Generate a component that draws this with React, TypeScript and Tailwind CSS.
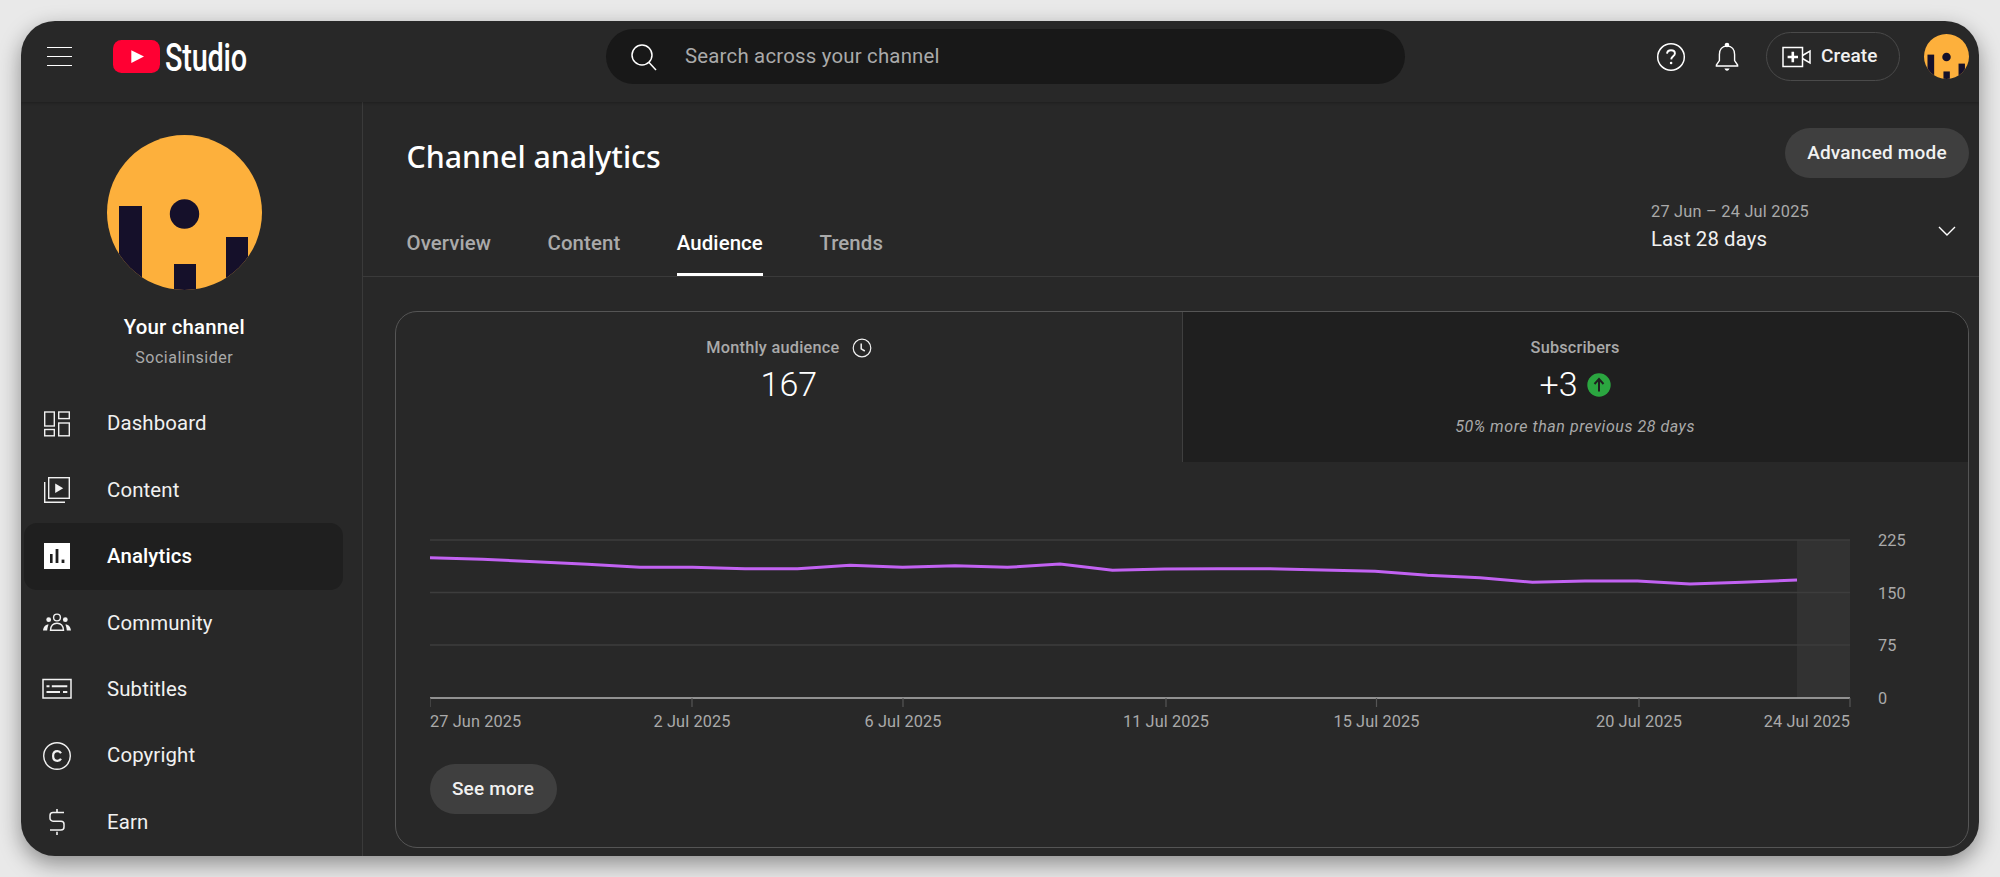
import React from "react";

const s = "#f1f1f1";

function Avatar({ size }: { size: number }) {
  return (
    <svg width={size} height={size} viewBox="0 0 155 155" className="rounded-full block shrink-0">
      <rect width="155" height="155" fill="#fdb03c" />
      <rect x="12" y="71" width="23" height="84" fill="#15102a" />
      <circle cx="77.5" cy="79" r="14.7" fill="#15102a" />
      <rect x="67" y="129" width="22" height="26" fill="#15102a" />
      <rect x="119" y="102" width="22" height="53" fill="#15102a" />
    </svg>
  );
}

function NavIcon({ name }: { name: string }) {
  const common = { width: 30, height: 30, viewBox: "0 0 30 30", fill: "none", stroke: s, strokeWidth: 1.4, className: "shrink-0" };
  switch (name) {
    case "Dashboard":
      return (
        <svg {...common}>
          <rect x="2.7" y="3" width="9.6" height="14" />
          <rect x="16.7" y="3" width="10.6" height="6.6" />
          <rect x="2.7" y="20.5" width="9.6" height="6.3" />
          <rect x="16.7" y="14" width="10.6" height="12.8" />
        </svg>
      );
    case "Content":
      return (
        <svg {...common}>
          <rect x="6.7" y="2.7" width="20.6" height="20.6" />
          <path d="M2.7 7v20.3H23" />
          <path d="M13.2 8.5v9.5l8-4.75z" fill={s} stroke="none" />
        </svg>
      );
    case "Analytics":
      return (
        <svg width="30" height="30" viewBox="0 0 30 30" className="shrink-0">
          <rect x="2" y="2" width="26" height="26" fill="#fff" />
          <rect x="8" y="13" width="2.6" height="9" fill="#1f1f1f" />
          <rect x="13.6" y="8" width="2.8" height="14" fill="#1f1f1f" />
          <rect x="19.6" y="18.6" width="2.8" height="3.4" fill="#1f1f1f" />
        </svg>
      );
    case "Community":
      return (
        <svg {...common}>
          <circle cx="15" cy="9.5" r="3.4" />
          <path d="M8.5 22.2c.3-4.6 3-7 6.5-7s6.2 2.4 6.5 7z" />
          <circle cx="6.7" cy="11.7" r="2.4" fill={s} stroke="none" />
          <circle cx="23.3" cy="11.7" r="2.4" fill={s} stroke="none" />
          <path d="M1 22.6c.3-3.6 2.2-6.2 5.6-6.2-.8 1.8-1.3 3.8-1.4 6.2zM29 22.6c-.3-3.6-2.2-6.2-5.6-6.2.8 1.8 1.3 3.8 1.4 6.2z" fill={s} stroke="none" />
        </svg>
      );
    case "Subtitles":
      return (
        <svg {...common}>
          <rect x="1" y="5.5" width="28" height="18.5" strokeWidth="1.5" />
          <path d="M4.5 12.2h3M9.8 12.2h15.5M4.5 18h13.5M21 18h4.3" strokeWidth="2" />
        </svg>
      );
    case "Copyright":
      return (
        <svg {...common}>
          <circle cx="15" cy="15" r="13.3" />
          <path d="M19 12.2c-.7-1.3-2-2-3.6-2-2.6 0-4.3 2-4.3 4.8s1.7 4.8 4.3 4.8c1.6 0 2.9-.7 3.6-2" strokeWidth="2.2" />
        </svg>
      );
    default:
      return (
        <svg {...common}>
          <path d="M15 2v3.3M15 24.7V28" strokeWidth="1.6" />
          <path d="M22 5.5H11a3 3 0 0 0-3 3v2.7a3 3 0 0 0 3 3h8a3 3 0 0 1 3 3v2.7a3 3 0 0 1-3 3H8" strokeWidth="1.5" />
        </svg>
      );
  }
}

const nav = ["Dashboard", "Content", "Analytics", "Community", "Subtitles", "Copyright", "Earn"];
const tabs = ["Overview", "Content", "Audience", "Trends"];

const pts: [number, number][] = [
  [430, 557.7], [482.5, 559.3], [535, 561.7], [587.5, 564.3], [640, 567.3], [692.5, 567.3], [745, 568.7],
  [797.5, 568.7], [850, 565.3], [902.5, 567.3], [955, 565.7], [1007.5, 567.3], [1060, 564], [1112.5, 570.3],
  [1165, 569], [1217.5, 568.7], [1270, 568.7], [1322.5, 570], [1375, 571.3], [1427.5, 575.3], [1480, 577.7],
  [1532.5, 582.3], [1585, 581], [1637.5, 581], [1690, 584], [1742.5, 582.3], [1797, 580],
];

const xLabels: [number, string, "start" | "middle" | "end"][] = [
  [430, "27 Jun 2025", "start"],
  [692, "2 Jul 2025", "middle"],
  [903, "6 Jul 2025", "middle"],
  [1166, "11 Jul 2025", "middle"],
  [1376.5, "15 Jul 2025", "middle"],
  [1639, "20 Jul 2025", "middle"],
  [1850, "24 Jul 2025", "end"],
];

function Chart() {
  return (
    <svg width="1490" height="200" viewBox="430 530 1490 200" className="block ml-[33.5px] mt-[68px] font-[Roboto,sans-serif] tracking-[0.12px]">
      <rect x="1797" y="540" width="53" height="158" fill="#323232" />
      {[540, 592.5, 645].map((y) => (
        <line key={y} x1="430" x2="1850" y1={y} y2={y} stroke="#3d3d3d" strokeWidth="1.4" />
      ))}
      <line x1="430" x2="1850" y1="698" y2="698" stroke="#b5b5b5" strokeWidth="1.6" />
      {xLabels.map(([x]) => (
        <line key={x} x1={x} x2={x} y1="698" y2="707" stroke="#555" strokeWidth="1.2" />
      ))}
      <polyline points={pts.map((p) => p.join(",")).join(" ")} fill="none" stroke="#c262f2" strokeWidth="3" />
      {xLabels.map(([x, t, a]) => (
        <text key={t} x={x} y="726.5" textAnchor={a} fontSize="16.3" fill="#aaaaaa">{t}</text>
      ))}
      {[["225", 540], ["150", 592.5], ["75", 645], ["0", 698]].map(([t, y]) => (
        <text key={t} x="1878" y={Number(y) + 6} fontSize="16.3" fill="#aaaaaa">{t}</text>
      ))}
    </svg>
  );
}

export default function App() {
  return (
    <div className="w-[2000px] h-[877px] bg-[#e9e9e9] p-[21px] font-[Roboto,sans-serif] text-[#f1f1f1] overflow-hidden">
      <div className="w-[1958px] h-[835px] bg-[#282828] rounded-[34px] overflow-hidden flex flex-col shadow-[0_8px_22px_rgba(0,0,0,0.4)]">
        <header className="h-[81px] shrink-0 flex items-center pb-[10px] relative shadow-[0_1px_3px_rgba(0,0,0,0.25)]">
          <div className="w-[585px] flex items-center shrink-0 pl-[26px]">
            <div className="w-[25px] flex flex-col gap-[7.5px]">
              <div className="h-[1.6px] bg-white" />
              <div className="h-[1.6px] bg-white" />
              <div className="h-[1.6px] bg-white" />
            </div>
            <svg width="47" height="33" viewBox="0 0 47 33" className="ml-[41px] shrink-0">
              <rect width="47" height="33" rx="8.5" fill="#ff0033" />
              <path d="M18.3 10.3v12.6L31 16.6z" fill="#fff" />
            </svg>
            <span className="ml-[5px] mt-[3px] text-[39px] leading-none font-medium text-white origin-left scale-x-[0.74] tracking-[-0.3px]">Studio</span>
          </div>
          <div className="w-[799px] h-[55px] rounded-full bg-[#181818] flex items-center shrink-0">
            <svg width="28" height="28" viewBox="0 0 28 28" fill="none" stroke="#fff" strokeWidth="1.5" className="ml-[24px] shrink-0">
              <circle cx="12" cy="12" r="10" />
              <path d="M18.8 19.3l7.2 7.7" />
            </svg>
            <span className="ml-[27px] text-[20.4px] text-[#aaaaaa] tracking-[0.2px]">Search across your channel</span>
          </div>
          <div className="flex-1 flex items-center justify-end pr-[10px]">
            <svg width="30" height="30" viewBox="0 0 30 30" fill="none" className="shrink-0">
              <circle cx="15" cy="15" r="13.3" stroke="#fff" strokeWidth="1.5" />
              <path d="M11 11.6c.2-2.2 1.8-3.4 4-3.4 2.3 0 3.9 1.3 3.9 3.2 0 2.8-3.5 2.9-3.7 6" stroke="#fff" strokeWidth="1.9" />
              <circle cx="15.1" cy="21" r="1.3" fill="#fff" />
            </svg>
            <svg width="26" height="30" viewBox="0 0 26 30" fill="none" stroke="#fff" strokeWidth="1.4" className="ml-[28px] shrink-0">
              <path d="M13 4c-5 0-7.6 3.6-7.6 8.4v6.2L2.4 23v1h21.2v-1l-3-4.4v-6.2C20.6 7.6 18 4 13 4z" />
              <circle cx="13" cy="3" r="1.6" fill="#fff" />
              <path d="M10.4 26.4h5.2l-1 1.6a2 2 0 0 1-3.2 0z" fill="#fff" stroke="none" />
            </svg>
            <div className="ml-[26px] h-[49px] w-[134px] rounded-full border-[1.5px] border-[#4a4a4a] flex items-center pl-[15px]">
              <svg width="29" height="22" viewBox="0 0 29 22" fill="none" stroke="#fff" strokeWidth="1.5" className="shrink-0">
                <rect x="1" y="1.5" width="19.5" height="19" />
                <path d="M5.6 11h10.4M10.8 5.8v10.4" strokeWidth="2.6" />
                <path d="M20.5 9.5l7.5-4.5v12l-7.5-4.5" />
              </svg>
              <span className="ml-[10px] text-[19px] font-medium tracking-[0.1px]">Create</span>
            </div>
            <div className="ml-[24px]"><Avatar size={45} /></div>
          </div>
        </header>
        <div className="flex-1 flex min-h-0">
          <aside className="w-[341.5px] shrink-0 border-r-[1.5px] border-[#3a3a3a] flex flex-col">
            <div className="flex flex-col items-center pt-[33px] pr-[14px]">
              <Avatar size={155} />
              <div className="mt-[24px] text-[20.4px] leading-[26px] font-medium text-white tracking-[0.2px]">Your channel</div>
              <div className="mt-[7px] text-[16px] leading-[22px] text-[#aaaaaa] tracking-[0.5px]">Socialinsider</div>
            </div>
            <nav className="mt-[21.5px] flex flex-col">
              {nav.map((n) => {
                const active = n === "Analytics";
                return (
                  <div
                    key={n}
                    className={
                      active
                        ? "h-[66.4px] ml-[3px] w-[319px] rounded-[13px] bg-[#1f1f1f] flex items-center pl-[18px] shrink-0"
                        : "h-[66.4px] ml-[3px] w-[319px] flex items-center pl-[18px] shrink-0"
                    }
                  >
                    <NavIcon name={n} />
                    <span className={active ? "ml-[35px] text-[20.4px] font-medium text-white tracking-[0.12px]" : "ml-[35px] text-[20.4px] text-[#f1f1f1] tracking-[0.12px]"}>{n}</span>
                  </div>
                );
              })}
            </nav>
          </aside>
          <main className="flex-1 min-w-0 flex flex-col">
            <section className="h-[175px] shrink-0 border-b-[1.5px] border-[#3a3a3a] flex flex-col">
              <div className="h-[76px] shrink-0 flex justify-between items-start pl-[44px] pr-[10px] pt-[26px]">
                <h1 className="text-[30.3px] leading-[58px] font-medium font-['Noto_Sans',sans-serif] text-white">Channel analytics</h1>
                <button className="w-[184px] h-[50px] rounded-full bg-[#3f3f3f] text-[19px] font-medium text-[#f1f1f1] tracking-[0.2px] pt-[1px]">Advanced mode</button>
              </div>
              <div className="flex-1 flex justify-between pl-[44px] pr-[23px]">
                <div className="flex gap-[56.5px] items-end">
                  {tabs.map((t) => (
                    <div
                      key={t}
                      className={
                        t === "Audience"
                          ? "h-[50px] pt-[3.5px] text-[20.4px] leading-[26px] font-medium text-white border-b-[3px] border-white tracking-[0.1px]"
                          : "h-[50px] pt-[3.5px] text-[20.4px] leading-[26px] font-medium text-[#aaaaaa] tracking-[0.1px]"
                      }
                    >
                      {t}
                    </div>
                  ))}
                </div>
                <div className="w-[305px] flex justify-between items-center">
                  <div className="flex flex-col pt-[1px]">
                    <div className="text-[16.3px] leading-[20px] text-[#aaaaaa] tracking-[0.25px]">27 Jun – 24 Jul 2025</div>
                    <div className="text-[20.4px] leading-[30px] text-[#f1f1f1] mt-[2px] tracking-[0.1px]">Last 28 days</div>
                  </div>
                  <svg width="18" height="10" viewBox="0 0 18 10" fill="none" stroke="#fff" strokeWidth="1.4" className="mt-[8px]">
                    <path d="M1 1l8 8 8-8" />
                  </svg>
                </div>
              </div>
            </section>
            <section className="ml-[32.5px] mr-[10.5px] mt-[34px] h-[537px] rounded-[22px] border-[1.5px] border-[#555555] overflow-hidden shrink-0">
              <div className="grid grid-cols-2 h-[150px]">
                <div className="flex flex-col items-center pt-[26px]">
                  <div className="flex items-center h-[20px]">
                    <span className="text-[16.3px] font-medium text-[#aaaaaa] tracking-[0.25px]">Monthly audience</span>
                    <svg width="20" height="20" viewBox="0 0 20 20" fill="none" stroke="#f1f1f1" strokeWidth="1.2" className="ml-[12px]">
                      <circle cx="10" cy="10" r="8.8" />
                      <path d="M9.2 5.5v5.3l3.6 2.2" strokeWidth="1.5" />
                    </svg>
                  </div>
                  <div className="mt-[4.5px] text-[34px] leading-[42px] font-light text-white">167</div>
                </div>
                <div className="bg-[#1f1f1f] border-l-[1.5px] border-[#3f3f3f] flex flex-col items-center pt-[26px]">
                  <div className="h-[20px] text-[16.3px] leading-[20px] font-medium text-[#aaaaaa] tracking-[0.2px]">Subscribers</div>
                  <div className="mt-[5.5px] h-[42px] flex items-center gap-[9px]">
                    <span className="text-[34px] leading-[42px] font-light text-white -mt-[2px]">+3</span>
                    <svg width="24" height="24" viewBox="0 0 24 24" className="shrink-0">
                      <circle cx="12" cy="12" r="11.7" fill="#2ba640" />
                      <path d="M12 18.5V6.5M7.5 11L12 6l4.5 5" fill="none" stroke="#1f1f1f" strokeWidth="2" />
                    </svg>
                  </div>
                  <div className="mt-[11px] text-[16px] leading-[20px] italic text-[#aaaaaa] tracking-[0.55px]">50% more than previous 28 days</div>
                </div>
              </div>
              <Chart />
              <button className="ml-[33.5px] mt-[34px] w-[127px] h-[50px] rounded-full bg-[#3f3f3f] text-[19px] font-medium text-[#f1f1f1] block tracking-[0.2px]">See more</button>
            </section>
          </main>
        </div>
      </div>
    </div>
  );
}
